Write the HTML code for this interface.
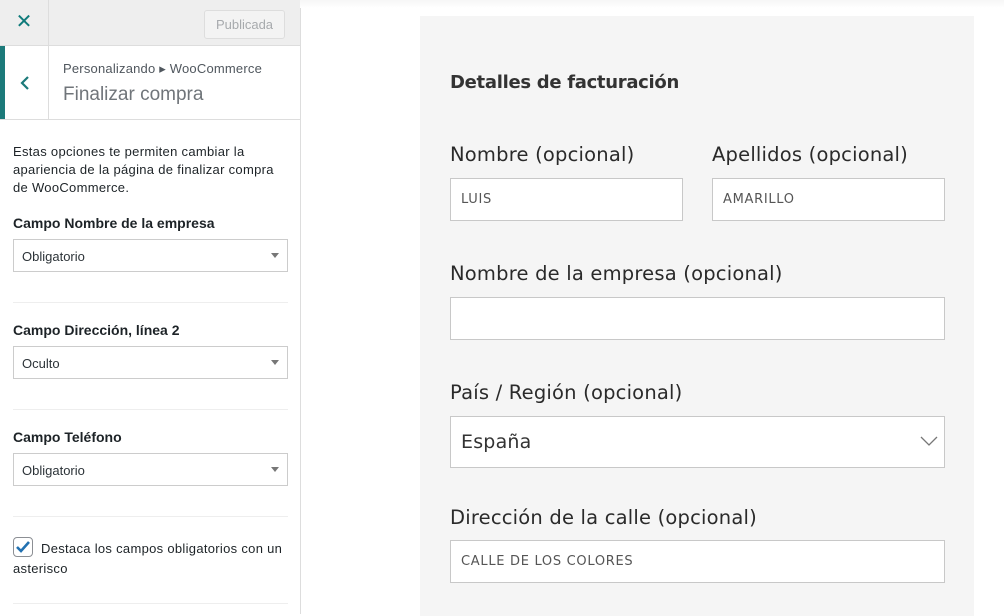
<!DOCTYPE html>
<html><head><meta charset="utf-8"><style>
*{box-sizing:border-box;margin:0;padding:0}
body{width:1004px;height:614px;overflow:hidden;background:#fff;font-family:"Liberation Sans",sans-serif;position:relative}
.side{position:absolute;left:0;top:0;width:301px;height:614px;background:#fff;border-right:1px solid #ddd}
.top{position:absolute;left:0;top:0;width:300px;height:46px;background:#eee;border-bottom:1px solid #ddd}
.close{position:absolute;left:0;top:0;width:49px;height:45px;border-right:1px solid #ddd;color:#0f7b7b;font-size:20px;text-align:center;line-height:45px}
.pub{position:absolute;left:204px;top:10px;width:81px;height:29px;border:1px solid #ddd;border-radius:3px;background:#f3f3f3;color:#a7aaad;font-size:13px;text-align:center;line-height:27px}
.sec{position:absolute;left:0;top:46px;width:300px;height:74px;border-bottom:1px solid #ddd}
.bar{position:absolute;left:0;top:0;width:5px;height:73px;background:#1c7a7a}
.back{position:absolute;left:5px;top:0;width:44px;height:73px;border-right:1px solid #ddd;background:#fff}
.crumb{position:absolute;left:63px;top:15px;font-size:13px;color:#50575e;letter-spacing:0.2px}
.title{position:absolute;left:63px;top:38px;font-size:19px;color:#70757a;font-weight:300}
.desc{position:absolute;left:13px;top:143px;width:275px;font-size:13px;line-height:18px;color:#1d2327;letter-spacing:0.3px}
.lbl{position:absolute;left:13px;font-size:14px;font-weight:bold;color:#1d2327}
.sel{position:absolute;left:13px;width:275px;height:33px;border:1px solid #ccc;font-size:13px;color:#2c3338;padding:9px 8px}
.sel:after{content:"";position:absolute;right:8px;top:13px;border:4px solid transparent;border-top:5px solid #777}
.hr{position:absolute;left:13px;width:275px;height:1px;background:#eee}
.chk{position:absolute;left:13px;top:537px;width:20px;height:20px;border:1px solid #8c8f94;border-radius:4px;background:#fff}
.ctext{position:absolute;left:13px;top:539px;width:285px;font-size:13px;line-height:20px;color:#1d2327;text-indent:28px;letter-spacing:0.3px}
.shadow{position:absolute;left:300px;top:0;width:704px;height:8px;background:linear-gradient(#f6f6f6,#fff)}
.panel{position:absolute;left:420px;top:16px;width:554px;height:600px;background:#f5f5f5}
.m{font-family:"DejaVu Sans","Liberation Sans",sans-serif}
.h{position:absolute;left:450px;top:72px;font-size:18px;font-weight:bold;color:#333;letter-spacing:-0.3px}
.fl{position:absolute;font-size:19.5px;color:#2a2a2a;letter-spacing:0.2px}
.in{position:absolute;background:#fff;border:1px solid #c8c8c8;font-size:13px;color:#555;padding:0 10px;display:flex;align-items:center;letter-spacing:0.7px}
</style></head><body>
<div class="side">
<div class="top"><div class="close">✕</div><div class="pub">Publicada</div></div>
<div class="sec"><div class="bar"></div><div class="back"><svg width="44" height="73"><path d="M23 31 L17 37 L23 43" stroke="#1c7a7a" stroke-width="2.2" fill="none"/></svg></div>
<div class="crumb">Personalizando ▸ WooCommerce</div><div class="title">Finalizar compra</div></div>
<div class="desc">Estas opciones te permiten cambiar la apariencia de la página de finalizar compra de WooCommerce.</div>
<div class="lbl" style="top:215px">Campo Nombre de la empresa</div>
<div class="sel" style="top:239px">Obligatorio</div>
<div class="hr" style="top:302px"></div>
<div class="lbl" style="top:322px">Campo Dirección, línea 2</div>
<div class="sel" style="top:346px">Oculto</div>
<div class="hr" style="top:409px"></div>
<div class="lbl" style="top:429px">Campo Teléfono</div>
<div class="sel" style="top:453px">Obligatorio</div>
<div class="hr" style="top:516px"></div>
<div class="chk"><svg width="18" height="18"><path d="M3 9 L7 13 L15 4" stroke="#2271b1" stroke-width="2.6" fill="none"/></svg></div>
<div class="ctext">Destaca los campos obligatorios con un asterisco</div>
<div class="hr" style="top:603px"></div>
</div>
<div class="shadow"></div>
<div class="panel"></div>
<div class="h m">Detalles de facturación</div>
<div class="fl m" style="left:450px;top:143px">Nombre (opcional)</div>
<div class="fl m" style="left:712px;top:143px">Apellidos (opcional)</div>
<div class="in m" style="left:450px;top:178px;width:233px;height:43px">LUIS</div>
<div class="in m" style="left:712px;top:178px;width:233px;height:43px">AMARILLO</div>
<div class="fl m" style="left:450px;top:262px">Nombre de la empresa (opcional)</div>
<div class="in m" style="left:450px;top:297px;width:495px;height:43px"></div>
<div class="fl m" style="left:450px;top:381px">País / Región (opcional)</div>
<div class="in m" style="left:450px;top:416px;width:495px;height:52px;font-size:19px;color:#333;letter-spacing:0.2px">España<svg style="position:absolute;right:6px;top:18px" width="18" height="12"><path d="M1 2 L9 10 L17 2" stroke="#777" stroke-width="1.3" fill="none"/></svg></div>
<div class="fl m" style="left:450px;top:506px">Dirección de la calle (opcional)</div>
<div class="in m" style="left:450px;top:540px;width:495px;height:43px">CALLE DE LOS COLORES</div>
</body></html>
